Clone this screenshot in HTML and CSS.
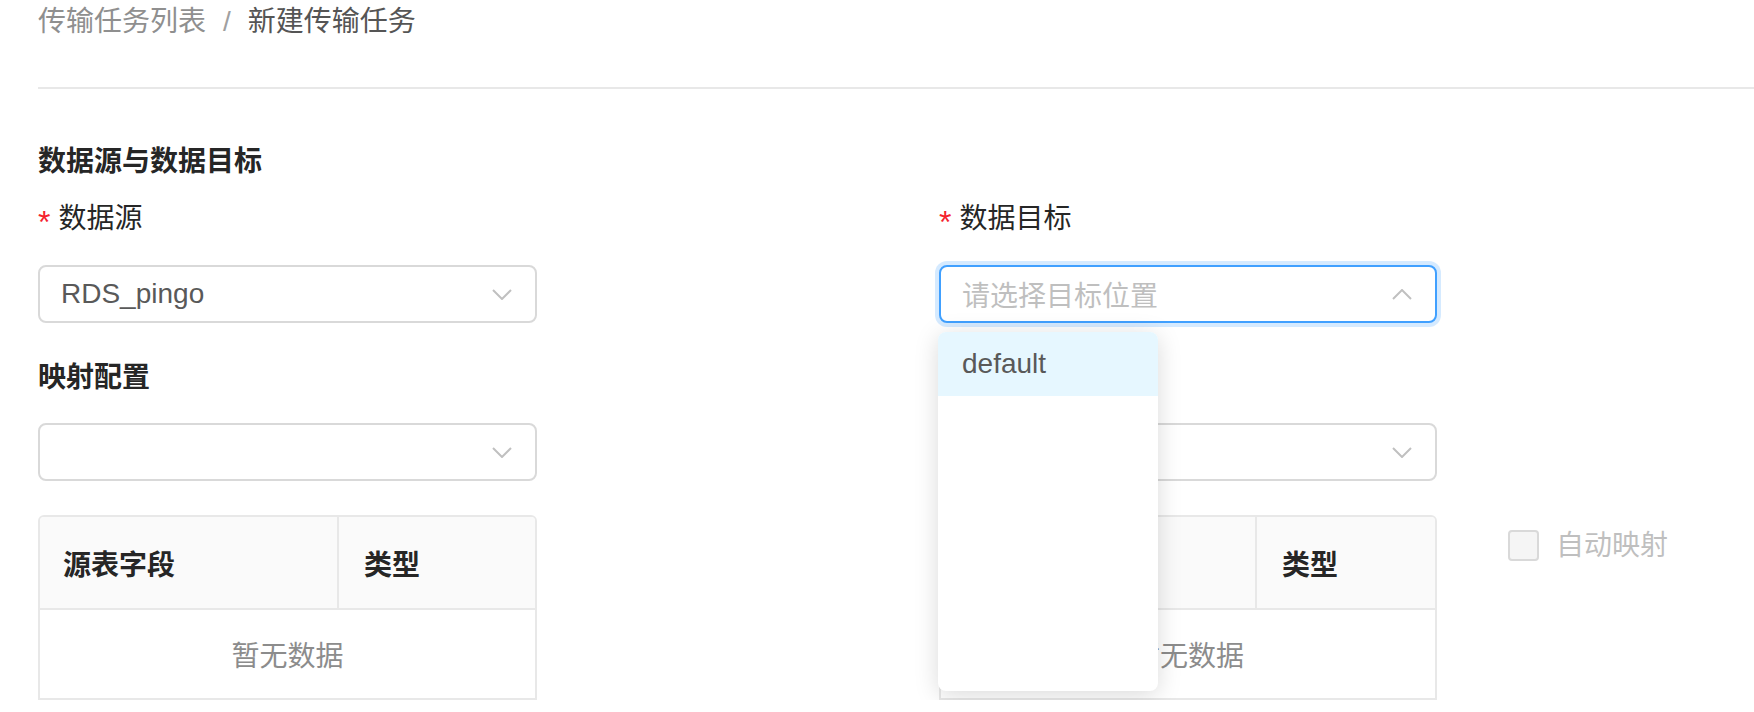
FILE: index.html
```html
<!DOCTYPE html>
<html lang="zh-CN">
<head>
<meta charset="utf-8">
<title>新建传输任务</title>
<link rel="stylesheet" href="styles.css">
</head>
<body>
<div class="page">
  <nav class="breadcrumb">
    <span class="crumb-link">传输任务列表</span>
    <span class="crumb-sep">/</span>
    <span class="crumb-current">新建传输任务</span>
  </nav>
  <div class="divider"></div>

  <h2 class="section-title">数据源与数据目标</h2>
  <div class="row row-fields">
    <div class="field">
      <label class="field-label"><span class="required">*</span>数据源</label>
      <div class="select">
        <span class="select-value">RDS_pingo</span>
        <svg class="chevron" width="20" height="11" viewBox="0 0 20 11"><polyline points="1,1 10,10 19,1"/></svg>
      </div>
    </div>
    <div class="field">
      <label class="field-label"><span class="required">*</span>数据目标</label>
      <div class="select-wrap">
        <div class="select select-focused">
          <span class="select-placeholder">请选择目标位置</span>
          <svg class="chevron" width="20" height="11" viewBox="0 0 20 11"><polyline points="1,10 10,1 19,10"/></svg>
        </div>
        <div class="dropdown">
          <div class="dropdown-item active">default</div>
        </div>
      </div>
    </div>
  </div>

  <h2 class="section-title mapping-title">映射配置</h2>
  <div class="row row-selects">
    <div class="select">
      <span class="select-value"></span>
      <svg class="chevron" width="20" height="11" viewBox="0 0 20 11"><polyline points="1,1 10,10 19,1"/></svg>
    </div>
    <div class="select">
      <span class="select-value"></span>
      <svg class="chevron" width="20" height="11" viewBox="0 0 20 11"><polyline points="1,1 10,10 19,1"/></svg>
    </div>
  </div>

  <div class="row row-tables">
    <div class="table table-source">
      <div class="thead">
        <div class="th">源表字段</div>
        <div class="th">类型</div>
      </div>
      <div class="empty">暂无数据</div>
    </div>
    <div class="target-wrap">
      <div class="table table-target">
        <div class="thead">
          <div class="th">目标表字段</div>
          <div class="th">类型</div>
        </div>
        <div class="empty">暂无数据</div>
      </div>
      <label class="checkbox disabled">
        <span class="checkbox-box"></span>
        <span class="checkbox-text">自动映射</span>
      </label>
    </div>
  </div>
</div>
</body>
</html>
```

FILE: styles.css
```css
html, body {
  margin: 0;
  padding: 0;
  background: #ffffff;
}

body {
  font-family: "Liberation Sans", "Noto Sans CJK SC", sans-serif;
  font-size: 28px;
  color: #262626;
}

.page {
  padding-left: 38px;
}

.breadcrumb {
  height: 44px;
  line-height: 44px;
  display: flex;
  align-items: center;
  white-space: nowrap;
}

.crumb-link {
  color: #8f8f8f;
}

.crumb-sep {
  color: #a0a0a0;
  margin: 0 17px 0 17px;
}

.crumb-current {
  color: #555555;
}

.divider {
  margin-top: 43px;
  height: 2px;
  background: #e8e8e8;
}

.section-title {
  margin: 53px 0 0 0;
  font-size: 28px;
  line-height: 40px;
  font-weight: 700;
  color: #262626;
}

.mapping-title {
  margin-top: 35px;
}

.row {
  display: grid;
  grid-template-columns: 499px 498px;
  column-gap: 402px;
}

.field-label {
  display: flex;
  align-items: center;
  margin-top: 17px;
  height: 40px;
  line-height: 40px;
  color: #262626;
}

.required {
  color: #f5222d;
  margin-right: 8px;
  font-size: 32px;
  position: relative;
  top: 3px;
  font-family: "Liberation Sans", sans-serif;
}

.select {
  box-sizing: border-box;
  height: 58px;
  border: 2px solid #d9d9d9;
  border-radius: 8px;
  padding: 0 23px 0 21px;
  display: flex;
  align-items: center;
  justify-content: space-between;
  background: #ffffff;
}

.field .select,
.field .select-wrap {
  margin-top: 26px;
}

.select-wrap {
  position: relative;
}

.select-focused {
  border-color: #40a0ff;
  box-shadow: 0 0 0 4px rgba(64, 160, 255, 0.22);
}

.select-value {
  color: #595959;
}

.select-placeholder {
  color: #bfbfbf;
}

.chevron {
  flex: none;
  display: block;
}

.chevron polyline {
  fill: none;
  stroke: #c0c0c0;
  stroke-width: 2;
}

.dropdown {
  position: absolute;
  left: -1px;
  top: 67px;
  width: 220px;
  height: 359px;
  background: #ffffff;
  border-radius: 8px;
  box-shadow: 0 4px 24px rgba(0, 0, 0, 0.15);
  overflow: hidden;
  z-index: 10;
}

.dropdown-item {
  height: 64px;
  line-height: 64px;
  padding-left: 24px;
  color: #595959;
}

.dropdown-item.active {
  background: #e6f7ff;
}

.row-selects {
  margin-top: 25px;
}

.row-tables {
  margin-top: 34px;
}

.table {
  box-sizing: border-box;
  border: 2px solid #e8e8e8;
  border-radius: 6px 6px 0 0;
  overflow: hidden;
}

.thead {
  display: grid;
  height: 91px;
  background: #fafafa;
  border-bottom: 2px solid #e8e8e8;
}

.table-source .thead {
  grid-template-columns: 299px 1fr;
}

.table-target .thead {
  grid-template-columns: 316px 1fr;
}

.th {
  display: flex;
  align-items: center;
  padding-left: 23px;
  font-weight: 700;
  color: #262626;
}

.th:first-child {
  border-right: 2px solid #e8e8e8;
}

.th:last-child {
  padding-left: 25px;
}

.empty {
  height: 88px;
  display: flex;
  align-items: center;
  justify-content: center;
  color: #8c8c8c;
}

.target-wrap {
  display: flex;
  align-items: flex-start;
  white-space: nowrap;
}

.table-target {
  flex: none;
  width: 498px;
}

.checkbox {
  flex: none;
  display: flex;
  align-items: center;
  margin-left: 71px;
  margin-top: 15px;
}

.checkbox-box {
  box-sizing: border-box;
  width: 31px;
  height: 31px;
  border: 2px solid #d9d9d9;
  border-radius: 4px;
  background: #f5f5f5;
}

.checkbox-text {
  margin-left: 17px;
  color: #bfbfbf;
  line-height: 31px;
}
```
